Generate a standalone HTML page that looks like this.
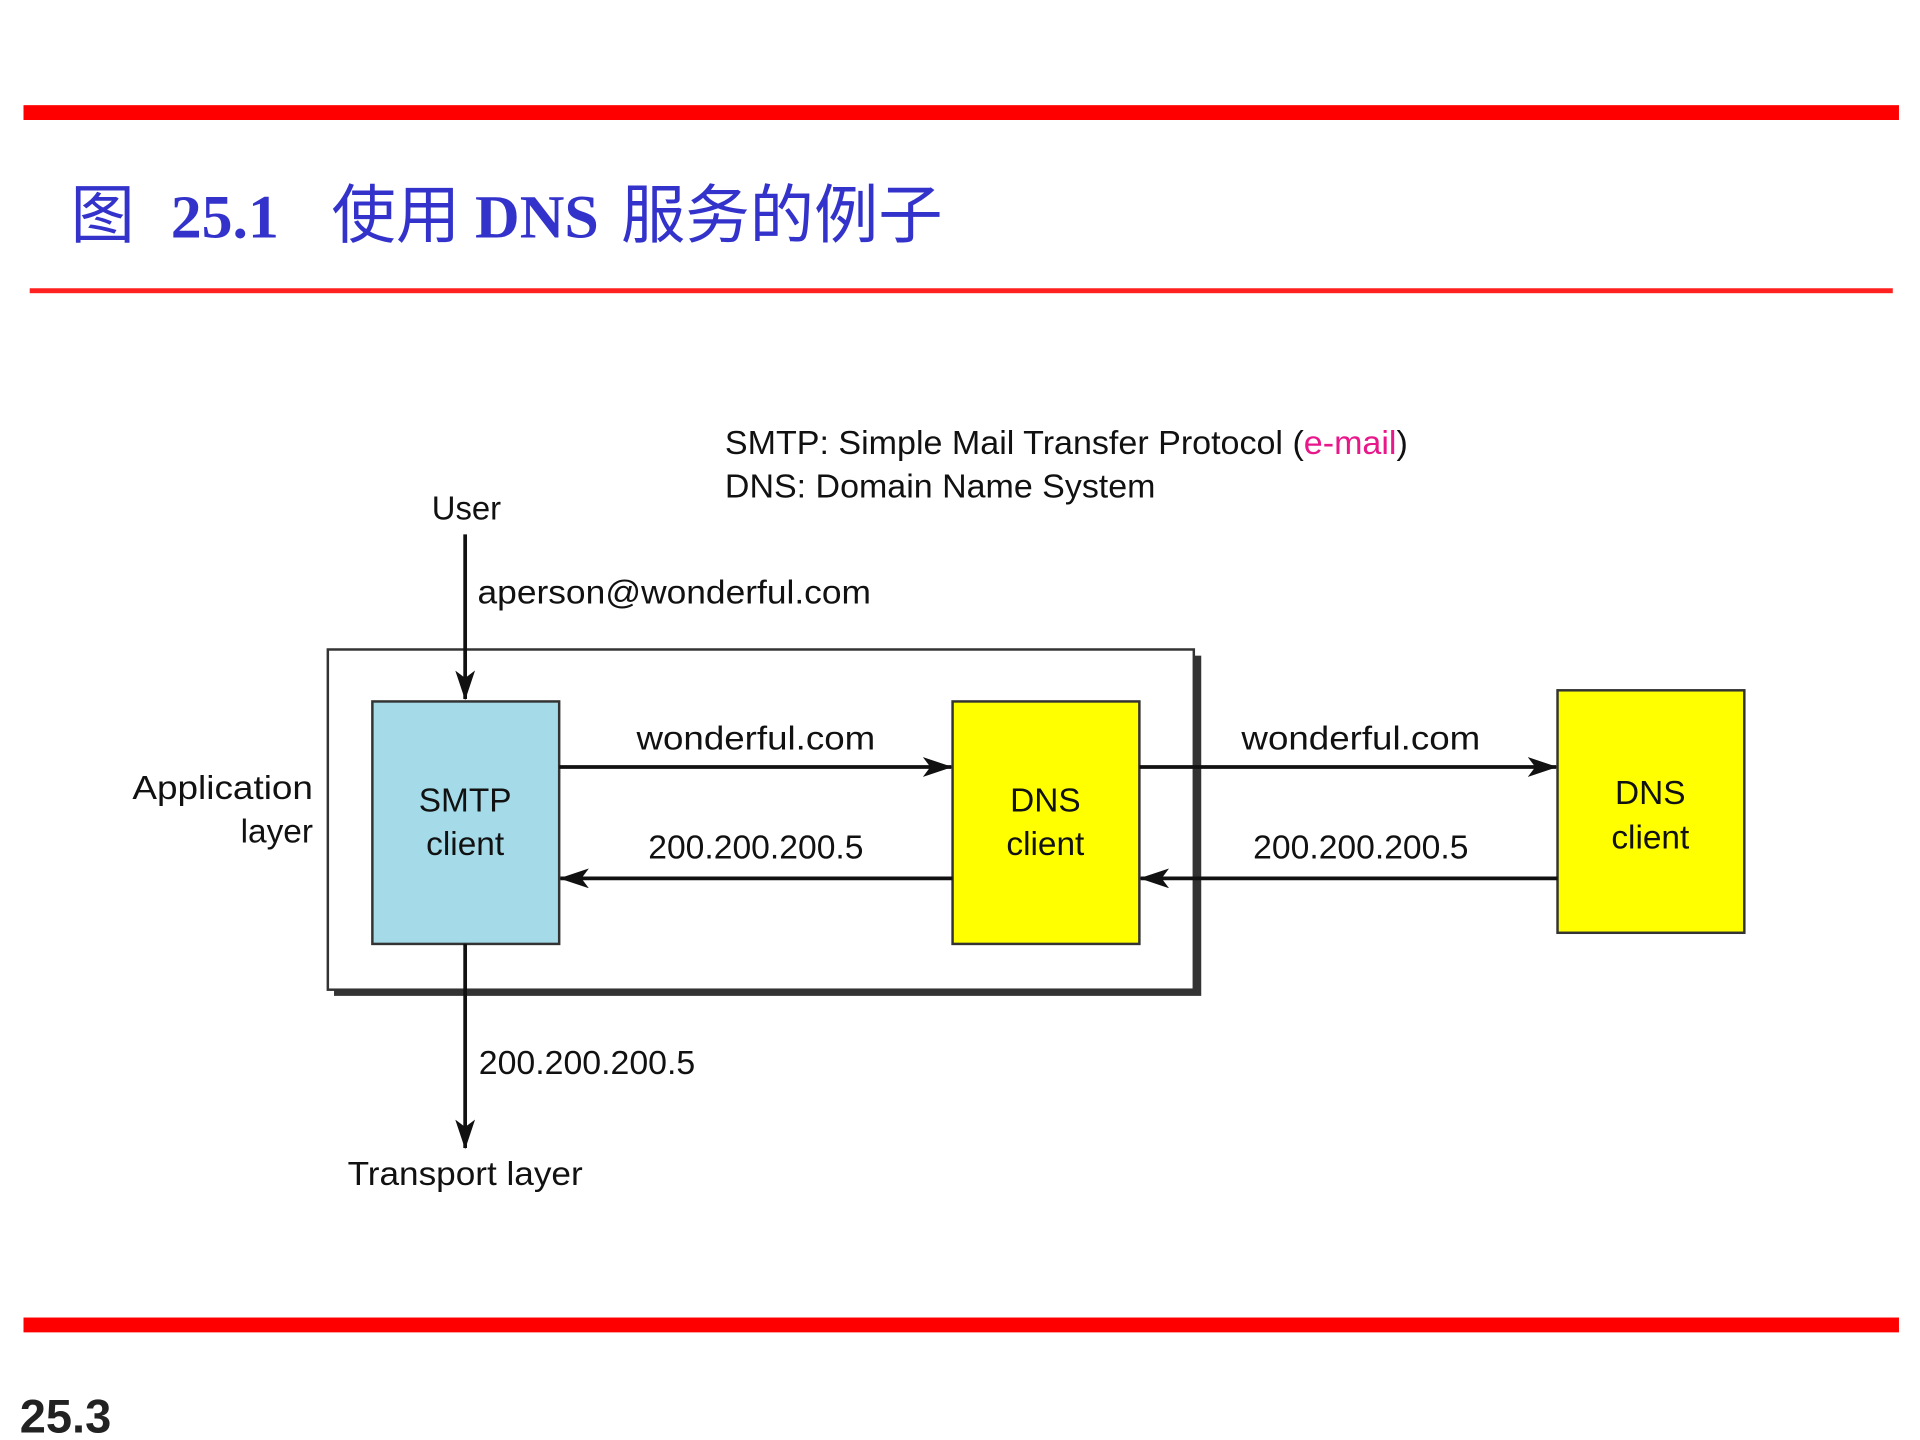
<!DOCTYPE html>
<html><head><meta charset="utf-8"><style>
html,body{margin:0;padding:0;background:#fff;width:1920px;height:1440px;overflow:hidden}
svg{display:block}
text{font-family:"Liberation Sans","Noto Sans CJK SC",sans-serif;fill:#111}
</style></head><body>
<svg width="1920" height="1440" viewBox="0 0 1552 1164" xmlns="http://www.w3.org/2000/svg">
<defs>
<marker id="ah" viewBox="0 0 24 16" refX="23" refY="8" markerWidth="24" markerHeight="16" markerUnits="userSpaceOnUse" orient="auto">
<path d="M0,0 L24,8 L0,16 L6,8 Z" fill="#111"/>
</marker>
</defs>
<rect x="19" y="85" width="1516" height="12" fill="#ff0000"/>
<rect x="24" y="233" width="1506" height="4" fill="#ff2020"/>
<rect x="19" y="1065" width="1516" height="12" fill="#ff0000"/>

<text x="57" y="192" font-size="52" style="fill:#3333cc" font-family="'Noto Sans CJK SC',sans-serif">图</text>
<text x="138" y="192" font-size="50" font-weight="bold" style="fill:#3333cc;font-family:'Liberation Serif',serif">25.1</text>
<text x="268" y="192" font-size="52" style="fill:#3333cc">使用</text>
<text x="384" y="192" font-size="50" font-weight="bold" style="fill:#3333cc;font-family:'Liberation Serif',serif">DNS</text>
<text x="502" y="192" font-size="52" style="fill:#3333cc">服务的例子</text>

<text x="16" y="1158" font-size="38" font-weight="bold" style="fill:#222">25.3</text>

<text x="586" y="367" font-size="27" textLength="552" lengthAdjust="spacingAndGlyphs">SMTP: Simple Mail Transfer Protocol (<tspan style="fill:#e8178a">e-mail</tspan>)</text>
<text x="586" y="402" font-size="27" textLength="348" lengthAdjust="spacingAndGlyphs">DNS: Domain Name System</text>

<text x="349" y="420" font-size="27" textLength="56" lengthAdjust="spacingAndGlyphs">User</text>
<text x="386" y="488" font-size="27" textLength="318" lengthAdjust="spacingAndGlyphs">aperson@wonderful.com</text>

<rect x="270" y="530" width="701" height="275" fill="#333"/>
<rect x="265" y="525" width="700" height="275" fill="#fff" stroke="#333" stroke-width="2"/>

<line x1="376" y1="432" x2="376" y2="565" stroke="#111" stroke-width="3" marker-end="url(#ah)"/>

<rect x="301" y="567" width="151" height="196" fill="#a5dbe8" stroke="#333" stroke-width="2"/>
<text x="376" y="656" font-size="27" text-anchor="middle">SMTP</text>
<text x="376" y="691" font-size="27" text-anchor="middle">client</text>

<rect x="770" y="567" width="151" height="196" fill="#ffff00" stroke="#333" stroke-width="2"/>
<text x="845" y="656" font-size="27" text-anchor="middle">DNS</text>
<text x="845" y="691" font-size="27" text-anchor="middle">client</text>

<rect x="1259" y="558" width="151" height="196" fill="#ffff00" stroke="#333" stroke-width="2"/>
<text x="1334" y="650" font-size="27" text-anchor="middle">DNS</text>
<text x="1334" y="686" font-size="27" text-anchor="middle">client</text>

<line x1="452" y1="620" x2="769" y2="620" stroke="#111" stroke-width="3" marker-end="url(#ah)"/>
<text x="611" y="606" font-size="27" text-anchor="middle" textLength="193" lengthAdjust="spacingAndGlyphs">wonderful.com</text>
<line x1="770" y1="710" x2="453" y2="710" stroke="#111" stroke-width="3" marker-end="url(#ah)"/>
<text x="611" y="694" font-size="27" text-anchor="middle" textLength="174" lengthAdjust="spacingAndGlyphs">200.200.200.5</text>

<line x1="921" y1="620" x2="1258" y2="620" stroke="#111" stroke-width="3" marker-end="url(#ah)"/>
<text x="1100" y="606" font-size="27" text-anchor="middle" textLength="193" lengthAdjust="spacingAndGlyphs">wonderful.com</text>
<line x1="1259" y1="710" x2="922" y2="710" stroke="#111" stroke-width="3" marker-end="url(#ah)"/>
<text x="1100" y="694" font-size="27" text-anchor="middle" textLength="174" lengthAdjust="spacingAndGlyphs">200.200.200.5</text>

<text x="253" y="646" font-size="27" text-anchor="end" textLength="146" lengthAdjust="spacingAndGlyphs">Application</text>
<text x="253" y="681" font-size="27" text-anchor="end">layer</text>

<line x1="376" y1="763" x2="376" y2="928" stroke="#111" stroke-width="3" marker-end="url(#ah)"/>
<text x="387" y="868" font-size="27" textLength="175" lengthAdjust="spacingAndGlyphs">200.200.200.5</text>
<text x="376" y="958" font-size="27" text-anchor="middle" textLength="190" lengthAdjust="spacingAndGlyphs">Transport layer</text>
</svg>
</body></html>
